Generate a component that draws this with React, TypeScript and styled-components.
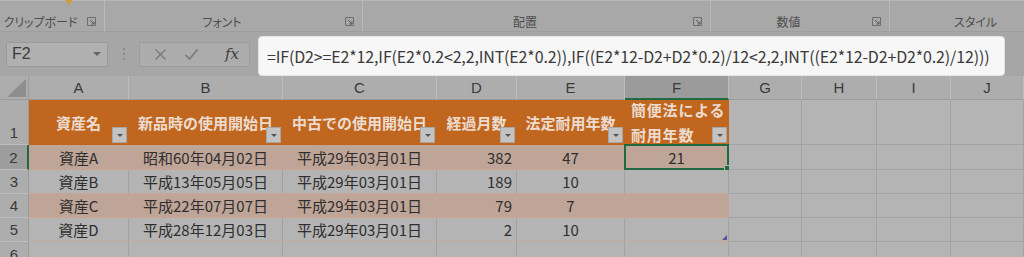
import React from 'react';
import styled, { createGlobalStyle } from 'styled-components';

const GlobalStyle = createGlobalStyle`
  html, body {
    margin: 0;
    padding: 0;
    background: #a8a8a8;
    overflow: hidden;
    font-family: "Noto Sans CJK JP", "Noto Sans", sans-serif;
  }
`;

const cols = [29, 100, 154, 154, 80, 108, 104, 73, 75, 74, 73];
const letters = ['A', 'B', 'C', 'D', 'E', 'F', 'G', 'H', 'I', 'J'];

const headers = ['資産名', '新品時の使用開始日', '中古での使用開始日', '経過月数', '法定耐用年数'];

const assets = [
  { name: '資産A', newDate: '昭和60年04月02日', usedDate: '平成29年03月01日', months: 382, life: 47, result: '21' },
  { name: '資産B', newDate: '平成13年05月05日', usedDate: '平成29年03月01日', months: 189, life: 10, result: '' },
  { name: '資産C', newDate: '平成22年07月07日', usedDate: '平成29年03月01日', months: 79, life: 7, result: '' },
  { name: '資産D', newDate: '平成28年12月03日', usedDate: '平成29年03月01日', months: 2, life: 10, result: '' },
];

const groups = [
  { label: 'クリップボード', width: 105, launcher: true },
  { label: 'フォント', width: 258, launcher: true },
  { label: '配置', width: 348, launcher: true },
  { label: '数値', width: 179, launcher: true },
  { label: 'スタイル', width: 180, launcher: false },
];

const Page = styled.div`
  width: 1024px;
  height: 257px;
  overflow: hidden;
`;

const Ribbon = styled.div`
  display: flex;
  height: 32px;
  border-bottom: 1px solid #9e9e9e;
  border-top: 1px solid #b8b8b8;
  box-sizing: border-box;
  position: relative;
`;

const PasteMark = styled.div`
  position: absolute;
  left: 65px;
  top: -1px;
  width: 0;
  height: 0;
  border-left: 4px solid transparent;
  border-right: 4px solid transparent;
  border-top: 5px solid #c9a03c;
`;

const RibbonGroup = styled.div<{ $w: number }>`
  flex: 0 0 ${(p) => p.$w}px;
  display: flex;
  align-items: center;
  border-right: 1px solid #bababa;
  box-sizing: border-box;
  padding: 10px 8px 0 0;
`;

const GroupLabel = styled.span`
  flex: 1;
  text-align: center;
  font-size: 12px;
  color: #4e4e4e;
  white-space: nowrap;
  font-feature-settings: "palt";
`;

const Launcher = styled.svg`
  width: 9px;
  height: 9px;
  margin-left: 6px;
`;

const FormulaBar = styled.div`
  display: flex;
  align-items: center;
  height: 44px;
  padding-left: 6px;
  background: #a6a6a6;
`;

const NameBox = styled.div`
  width: 102px;
  height: 25px;
  box-sizing: border-box;
  border: 1px solid #9a9a9a;
  background: #b0b0b0;
  display: flex;
  align-items: center;
  justify-content: space-between;
  padding: 0 6px 0 5px;
  font-size: 16px;
  color: #3a3a3a;
  font-family: "Liberation Sans", sans-serif;
`;

const Caret = styled.span`
  width: 0;
  height: 0;
  border-left: 4px solid transparent;
  border-right: 4px solid transparent;
  border-top: 4px solid #666;
`;

const Dots = styled.div`
  width: 31px;
  display: flex;
  flex-direction: column;
  align-items: center;
  gap: 3px;
  & > span {
    width: 2px;
    height: 2px;
    background: #8a8a8a;
  }
`;

const FuncButtons = styled.div`
  width: 111px;
  height: 25px;
  box-sizing: border-box;
  border: 1px solid #9c9c9c;
  background: #acacac;
  display: flex;
  align-items: center;
  padding-left: 14px;
  gap: 17px;
`;

const FxLabel = styled.span`
  font-family: "DejaVu Serif", serif;
  font-style: italic;
  font-size: 15px;
  color: #3c3c3c;
  margin-left: 9px;
`;

const FormulaBox = styled.div`
  margin-left: 8px;
  width: 747px;
  height: 40px;
  box-sizing: border-box;
  background: #f7f7f7;
  border: 1px solid #e2e2e2;
  border-radius: 4px;
  display: flex;
  align-items: center;
  padding-left: 8px;
  margin-top: 3px;
`;

const FormulaText = styled.span`
  font-size: 16px;
  color: #3a3a3a;
  white-space: nowrap;
  letter-spacing: -0.15px;
`;

const Sheet = styled.div`
  display: grid;
  grid-template-columns: ${cols.map((c) => `${c}px`).join(' ')};
  grid-template-rows: 24px 45px 25px 24px 24px 24px 25px;
`;

const ColHeader = styled.div<{ $active?: boolean }>`
  background: ${(p) => (p.$active ? '#9b9b9b' : '#adadad')};
  border-right: 1px solid #bdbdbd;
  border-bottom: ${(p) => (p.$active ? '2px solid #1f6a40' : '1px solid #9a9a9a')};
  box-sizing: border-box;
  display: flex;
  align-items: center;
  justify-content: center;
  font-family: "Liberation Sans", sans-serif;
  font-size: 15px;
  color: #3a3a3a;
`;

const Corner = styled.div`
  background: #adadad;
  border-right: 1px solid #9a9a9a;
  border-bottom: 1px solid #9a9a9a;
  box-sizing: border-box;
  position: relative;
  &::after {
    content: '';
    position: absolute;
    right: 2px;
    bottom: 2px;
    border-left: 19px solid transparent;
    border-bottom: 18px solid #8e8e8e;
  }
`;

const RowHeader = styled.div<{ $active?: boolean; $bottom?: boolean }>`
  background: ${(p) => (p.$active ? '#9d9d9d' : '#adadad')};
  border-right: ${(p) => (p.$active ? '2px solid #1f6a40' : '1px solid #9a9a9a')};
  border-bottom: 1px solid #bdbdbd;
  box-sizing: border-box;
  display: flex;
  align-items: ${(p) => (p.$bottom ? 'flex-end' : 'center')};
  justify-content: center;
  padding-bottom: ${(p) => (p.$bottom ? '3px' : '0')};
  font-family: "Liberation Sans", sans-serif;
  font-size: 15px;
  color: #3a3a3a;
`;

type Tone = 'head' | 'band' | 'plain';

const toneBg: Record<Tone, string> = { head: '#c1661f', band: '#bea597', plain: '#b4b4b4' };
const toneLine: Record<Tone, string> = { head: '#c1661f', band: '#bea597', plain: '#a3a3a3' };
const toneBottom: Record<Tone, string> = { head: '#c1661f', band: '#c9a792', plain: '#c6a896' };

const Cell = styled.div<{ $tone?: Tone; $align?: string; $table?: boolean }>`
  position: relative;
  box-sizing: border-box;
  background: ${(p) => toneBg[p.$tone || 'plain']};
  border-right: 1px solid ${(p) => toneLine[p.$tone || 'plain']};
  border-bottom: 1px solid ${(p) => (p.$table ? toneBottom[p.$tone || 'plain'] : '#a3a3a3')};
  display: flex;
  align-items: center;
  justify-content: ${(p) => p.$align || 'center'};
  padding: 0 4px;
  font-size: 15px;
  color: #2e2e2e;
  white-space: nowrap;
`;

const HeadText = styled.span<{ $left?: boolean }>`
  font-weight: bold;
  color: #ecdcd0;
  font-size: 15px;
  line-height: 25px;
  padding-top: ${(p) => (p.$left ? '0' : '1px')};
  white-space: nowrap;
  letter-spacing: ${(p) => (p.$left ? '0.8px' : '0')};
  margin-left: ${(p) => (p.$left ? '2px' : '0')};
`;

const FilterButton = styled.span`
  position: absolute;
  right: 1px;
  bottom: 1px;
  width: 15px;
  height: 16px;
  box-sizing: border-box;
  background: #c3c3c3;
  border: 1px solid #a6a6a6;
  display: flex;
  align-items: center;
  justify-content: center;
  &::after {
    content: '';
    border-left: 3px solid transparent;
    border-right: 3px solid transparent;
    border-top: 3px solid #555;
  }
`;

const Selection = styled.span`
  position: absolute;
  left: -1px;
  top: -1px;
  right: -1px;
  bottom: -1px;
  border: 2px solid #1f6a40;
  pointer-events: none;
  &::after {
    content: '';
    position: absolute;
    right: -4px;
    bottom: -4px;
    width: 5px;
    height: 5px;
    background: #1f6a40;
    border: 1px solid #b4b4b4;
  }
`;

const ResizeMark = styled.span`
  position: absolute;
  right: 1px;
  bottom: 1px;
  width: 0;
  height: 0;
  border-left: 5px solid transparent;
  border-bottom: 5px solid #55569a;
`;

function LauncherIcon() {
  return (
    <Launcher viewBox="0 0 9 9">
      <path d="M0.5 8.5V0.5H8.5V8.5Z" fill="none" stroke="#6e6e6e" strokeWidth="1" />
      <path d="M3 3L7 7M7 4.5V7H4.5" fill="none" stroke="#5a5a5a" strokeWidth="1" />
    </Launcher>
  );
}

export default function App() {
  return (
    <Page>
      <GlobalStyle />
      <Ribbon>
        <PasteMark />
        {groups.map((g) => (
          <RibbonGroup key={g.label} $w={g.width}>
            <GroupLabel>{g.label}</GroupLabel>
            {g.launcher && <LauncherIcon />}
          </RibbonGroup>
        ))}
      </Ribbon>
      <FormulaBar>
        <NameBox>
          F2
          <Caret />
        </NameBox>
        <Dots>
          <span />
          <span />
          <span />
        </Dots>
        <FuncButtons>
          <svg width="13" height="13" viewBox="0 0 13 13">
            <path d="M1.5 1.5L11.5 11.5M11.5 1.5L1.5 11.5" stroke="#7a7a7a" strokeWidth="1.4" />
          </svg>
          <svg width="15" height="13" viewBox="0 0 15 13">
            <path d="M1.5 7L5.5 11L13.5 1.5" fill="none" stroke="#7a7a7a" strokeWidth="1.6" />
          </svg>
          <FxLabel>fx</FxLabel>
        </FuncButtons>
        <FormulaBox>
          <FormulaText>=IF(D2&gt;=E2*12,IF(E2*0.2&lt;2,2,INT(E2*0.2)),IF((E2*12-D2+D2*0.2)/12&lt;2,2,INT((E2*12-D2+D2*0.2)/12)))</FormulaText>
        </FormulaBox>
      </FormulaBar>
      <Sheet>
        <Corner />
        {letters.map((l) => (
          <ColHeader key={l} $active={l === 'F'}>{l}</ColHeader>
        ))}

        <RowHeader $bottom>1</RowHeader>
        {headers.map((h) => (
          <Cell key={h} $tone="head" $table>
            <HeadText>{h}</HeadText>
            <FilterButton />
          </Cell>
        ))}
        <Cell $tone="head" $table $align="flex-start">
          <HeadText $left>
            簡便法による
            <br />
            耐用年数
          </HeadText>
          <FilterButton />
        </Cell>
        {letters.slice(6).map((l) => (
          <Cell key={`1${l}`} />
        ))}

        {assets.map((a, i) => {
          const tone: Tone = i % 2 === 0 ? 'band' : 'plain';
          const row = i + 2;
          return (
            <React.Fragment key={a.name}>
              <RowHeader $active={row === 2}>{row}</RowHeader>
              <Cell $tone={tone} $table>{a.name}</Cell>
              <Cell $tone={tone} $table>{a.newDate}</Cell>
              <Cell $tone={tone} $table>{a.usedDate}</Cell>
              <Cell $tone={tone} $table $align="flex-end">{a.months}</Cell>
              <Cell $tone={tone} $table>{a.life}</Cell>
              <Cell $tone={tone} $table>
                {a.result}
                {row === 2 && <Selection />}
                {row === 5 && <ResizeMark />}
              </Cell>
              {letters.slice(6).map((l) => (
                <Cell key={`${row}${l}`} />
              ))}
            </React.Fragment>
          );
        })}

        <RowHeader>6</RowHeader>
        {letters.map((l) => (
          <Cell key={`6${l}`} />
        ))}
      </Sheet>
    </Page>
  );
}
